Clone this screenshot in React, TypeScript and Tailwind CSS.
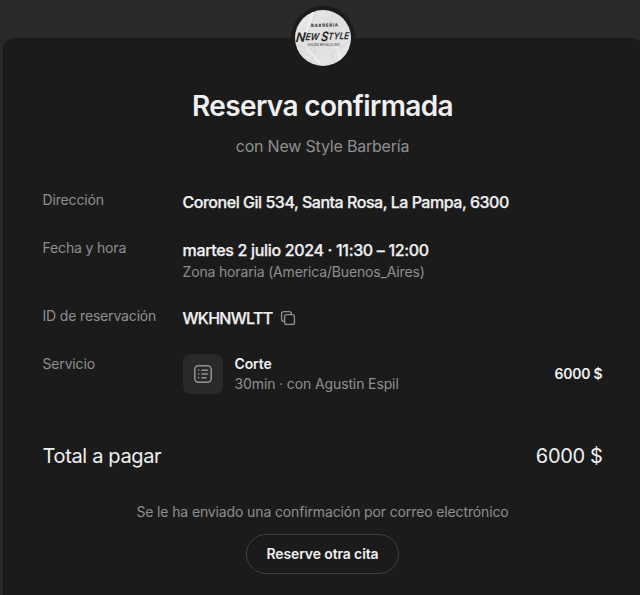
import type { ReactNode } from "react";

function ShopLogo() {
  return (
    <svg viewBox="0 0 56 56" className="size-14 overflow-visible" role="img" aria-label="New Style">
      <defs>
        <linearGradient id="paper" x1="0" y1="0" x2="1" y2="1">
          <stop offset="0" stopColor="#e9e9e9" />
          <stop offset="0.5" stopColor="#dfdfdf" />
          <stop offset="1" stopColor="#e8e8e8" />
        </linearGradient>
        <clipPath id="disc">
          <circle cx="28" cy="28" r="28" />
        </clipPath>
      </defs>
      <g clipPath="url(#disc)">
        <rect width="56" height="56" fill="url(#paper)" />
        <path d="M22 0l-9 23 7 16-5 17M38 0l-6 31 8 25M0 34l18 7M56 30L36 45" stroke="#d2d2d2" strokeWidth="1.2" fill="none" opacity="0.6" />
        <path d="M18 2l-7 20M41 33l5 18M12 38l13 16" stroke="#f3f3f3" strokeWidth="2" fill="none" opacity="0.7" />
      </g>
      <g fontFamily="Inter, sans-serif" textAnchor="middle">
        <text x="29.5" y="16.8" fontSize="4.3" fontWeight="800" textLength="27" fill="#3c3c3c" transform="rotate(-1 29 16)">BARBERÍA</text>
        <text x="28.5" y="36.2" fontSize="3" fontWeight="600" textLength="32" fill="#5c5c5c">SALÓN MASCULINO</text>
      </g>
      <g fontFamily="Inter, sans-serif" fontWeight="600" fontStyle="italic" fill="#202020" transform="rotate(-1.5 28 28) skewX(-8)">
        <text x="4.8" y="31.2" fontSize="13" textLength="9.5" lengthAdjust="spacingAndGlyphs">N</text>
        <text x="14.3" y="29.8" fontSize="9.5" textLength="13.5" lengthAdjust="spacingAndGlyphs">EW</text>
        <text x="30" y="31.2" fontSize="13" textLength="7" lengthAdjust="spacingAndGlyphs">S</text>
        <text x="37" y="29.8" fontSize="9.5" textLength="21" lengthAdjust="spacingAndGlyphs">TYLE</text>
      </g>
    </svg>
  );
}

function CopyIcon() {
  return (
    <svg width="16" height="16" viewBox="0 0 16 16" fill="none" stroke="#8f8f8f" strokeWidth="1.35" strokeLinejoin="round" strokeLinecap="round">
      <rect x="4.6" y="4.6" width="9.8" height="9.8" rx="2" />
      <path d="M4.3 11.3H3.6a2 2 0 0 1-2-2V3.6a2 2 0 0 1 2-2h5.7a2 2 0 0 1 2 2v.7" />
    </svg>
  );
}

function ListIcon() {
  return (
    <svg width="20" height="20" viewBox="0 0 20 20" fill="none" stroke="#929292" strokeWidth="1.5" strokeLinecap="round">
      <rect x="1.75" y="1.75" width="16.5" height="16.5" rx="3.75" />
      <path d="M9 6.3h5.6M9 10h5.6M9 13.7h4M5.6 6.3h.2M5.6 10h.2M5.6 13.7h.2" />
    </svg>
  );
}

function Row({ label, children }: { label: string; children: ReactNode }) {
  return (
    <div className="flex">
      <div className="w-[140px] shrink-0 text-sm leading-5 tracking-[-0.16px] text-[#8f8f8f]">{label}</div>
      <div className="min-w-0 flex-1">{children}</div>
    </div>
  );
}

export default function App() {
  return (
    <div className="h-[595px] w-[640px] overflow-hidden bg-[#292929] pt-[38px] pl-[3px] font-['Inter',sans-serif] text-[#f0f0f0]">
      <main className="relative h-[600px] w-[640px] rounded-t-xl bg-[#1b1b1b] pt-[50px] pr-[40.5px] pl-[39.5px]">
        <div className="absolute top-[-32px] left-1/2 -translate-x-1/2 rounded-full bg-[#1b1b1b] p-1">
          <ShopLogo />
        </div>
        <h1 className="text-center text-[28px] leading-9 font-semibold tracking-[-0.64px]">Reserva confirmada</h1>
        <p className="mt-[10px] text-center text-base leading-6 tracking-[-0.2px] text-[#8f8f8f]">con New Style Barbería</p>

        <div className="mt-8 flex flex-col gap-6">
          <Row label="Dirección">
            <div className="text-base leading-6 font-medium tracking-[-0.47px] [-webkit-text-stroke:0.25px_#f0f0f0]">Coronel Gil 534, Santa Rosa, La Pampa, 6300</div>
          </Row>
          <Row label="Fecha y hora">
            <div className="text-base leading-6 font-medium tracking-[-0.33px] [-webkit-text-stroke:0.25px_#f0f0f0]">martes 2 julio 2024 · 11:30 – 12:00</div>
            <div className="text-sm leading-5 tracking-[-0.16px] text-[#8f8f8f]">Zona horaria (America/Buenos_Aires)</div>
          </Row>
          <Row label="ID de reservación">
            <div className="flex items-center gap-2">
              <span className="text-base leading-6 font-medium tracking-[-0.7px] [-webkit-text-stroke:0.25px_#f0f0f0]">WKHNWLTT</span>
              <CopyIcon />
            </div>
          </Row>
          <Row label="Servicio">
            <div className="flex items-center">
              <div className="flex size-10 items-center justify-center rounded-lg bg-[#292929]">
                <ListIcon />
              </div>
              <div className="ml-3 flex-1 text-sm leading-5 tracking-[-0.12px]">
                <div className="font-semibold">Corte</div>
                <div className="text-[#8f8f8f]">30min · con Agustin Espil</div>
              </div>
              <div className="text-sm leading-5 font-semibold tracking-[-0.2px]">6000 $</div>
            </div>
          </Row>
        </div>

        <div className="mt-12 flex justify-between text-xl leading-7 tracking-[-0.34px]">
          <span>Total a pagar</span>
          <span>6000 $</span>
        </div>

        <p className="mt-8 text-center text-sm leading-5 tracking-[-0.13px] text-[#8f8f8f]">Se le ha enviado una confirmación por correo electrónico</p>
        <div className="mt-3 flex justify-center">
          <button className="h-10 w-[153px] rounded-full border border-[#404040] text-sm leading-5 font-semibold tracking-[-0.12px]">Reserve otra cita</button>
        </div>
      </main>
    </div>
  );
}
